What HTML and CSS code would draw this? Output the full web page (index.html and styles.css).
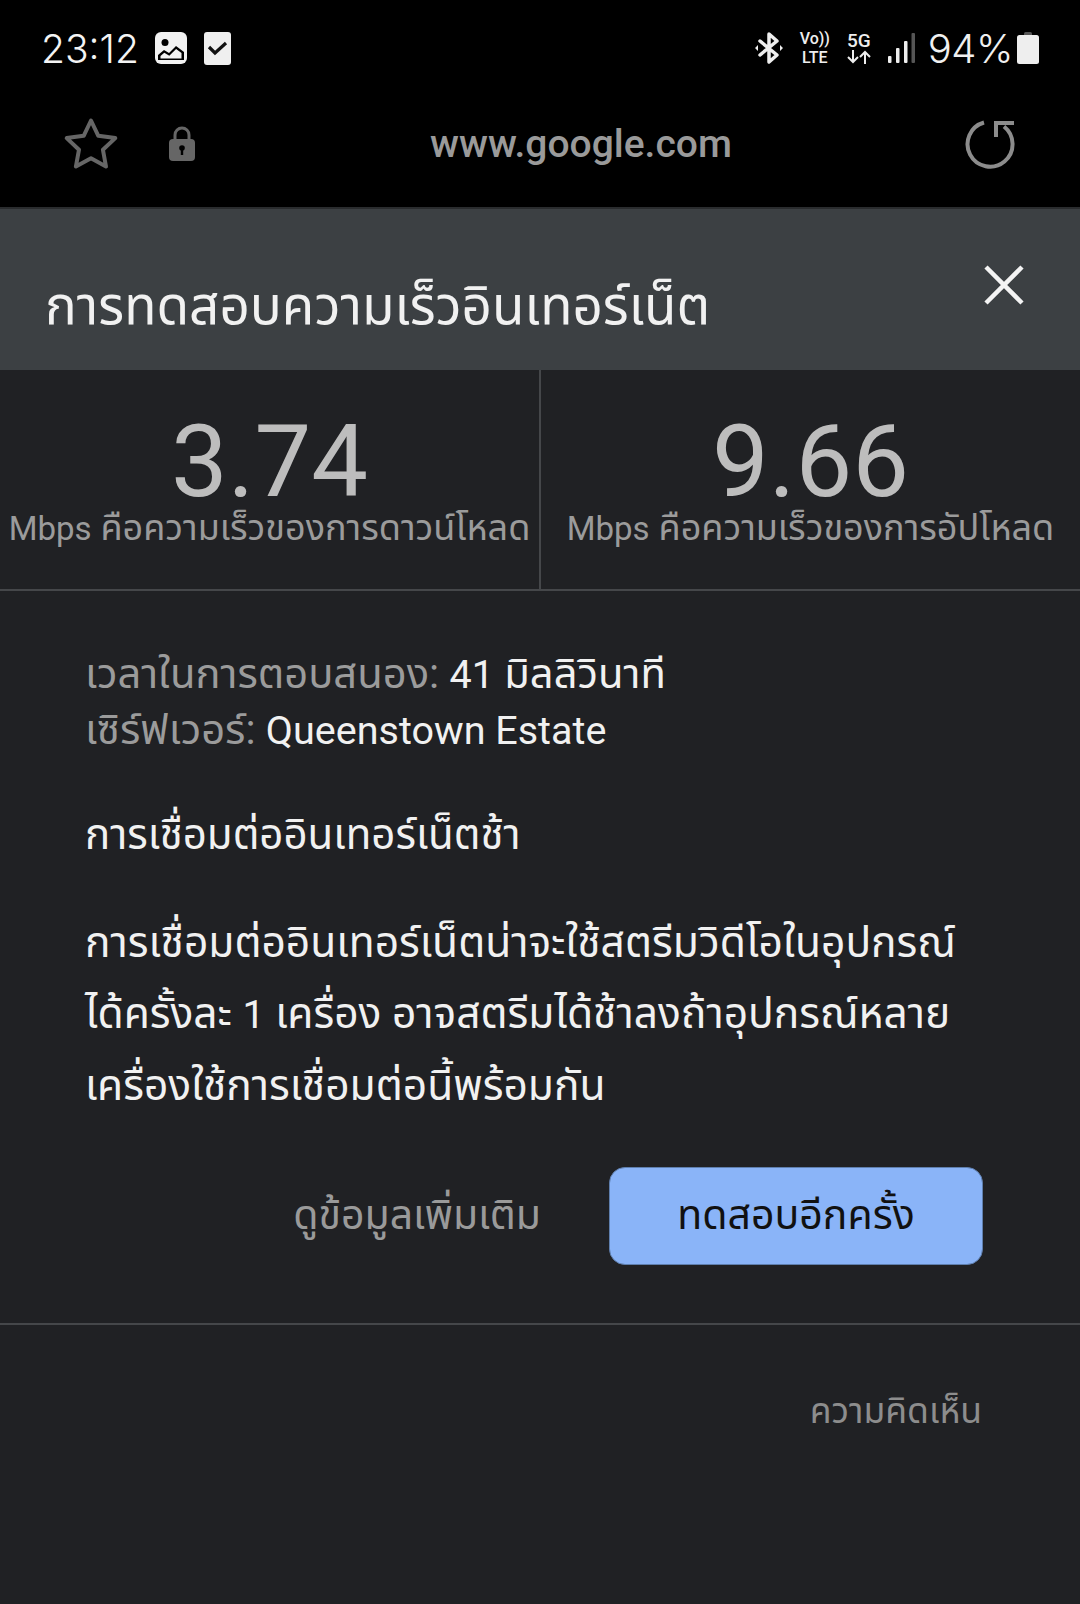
FILE: index.html
```html
<!DOCTYPE html>
<html lang="th">
<head>
    <meta charset="UTF-8">
    <meta name="viewport" content="width=device-width, initial-scale=1.0">
    <title>การทดสอบความเร็วอินเทอร์เน็ต</title>
    <link rel="stylesheet" href="styles.css">
</head>
<body>
    <div class="status-bar">
        <div class="status-left">
            <span class="clock">23:12</span>
            <svg class="ic-gallery" width="32" height="32" viewBox="0 0 32 32">
                <rect width="32" height="32" rx="6" fill="#f2f2f2"/>
                <circle cx="10" cy="10.500" r="3.500" fill="#000"/>
                <path d="M3 28v-5l6-5 5 3 7-7 8 6v8z" fill="#000"/>
                <path d="M5.500 26.500v-2.500l3.800-3.200 5 3 6.800-6.700 5.400 4v5.400z" fill="#f2f2f2"/>
            </svg>
            <svg class="ic-check" width="27" height="33" viewBox="0 0 27 33">
                <rect width="27" height="33" rx="3" fill="#efefef"/>
                <path d="M5 15l6 6L22 11" fill="none" stroke="#111" stroke-width="3.200"/>
            </svg>
        </div>
        <div class="status-right">
            <svg class="ic-bt" width="28" height="32" viewBox="0 0 28 32">
                <path d="M5 9l17 14-8 7V2l8 7L5 23" fill="none" stroke="#eee" stroke-width="3.500" stroke-linejoin="round" stroke-linecap="round"/>
                <path d="M0 16l3-3v6zM28 16l-3-3v6z" fill="#eee"/>
            </svg>
            <div class="net-label">
                <span class="volte-top">Vo))</span>
                <span class="volte-bottom">LTE</span>
            </div>
            <div class="net-label net-5g">
                <span class="volte-top">5G</span>
                <svg width="24" height="14" viewBox="0 0 24 14">
                    <path d="M6 0v12M1 7l5 5 5-5M18 14V2M13 7l5-5 5 5" fill="none" stroke="#eee" stroke-width="2"/>
                </svg>
            </div>
            <svg class="ic-signal" width="27" height="30" viewBox="0 0 27 30">
                <rect x="0" y="23" width="3.500" height="7" rx="1" fill="#eee"/>
                <rect x="8" y="15" width="3.500" height="15" rx="1" fill="#eee"/>
                <rect x="16" y="8" width="3.500" height="22" rx="1" fill="#eee"/>
                <rect x="23.500" y="0" width="3.500" height="30" rx="1" fill="#555"/>
            </svg>
            <span class="battery-text">94%</span>
            <svg class="ic-battery" width="22" height="32" viewBox="0 0 22 32">
                <path d="M7 3V1.500Q7 0 8.500 0h5Q15 0 15 1.500V3z" fill="#555"/>
                <path d="M2.500 3h17Q22 3 22 5.500v24q0 2.500-2.500 2.500h-17Q0 32 0 29.500v-24Q0 3 2.500 3z" fill="#eee"/>
            </svg>
        </div>
    </div>

    <div class="url-bar">
        <svg class="ic-star" width="56" height="54" viewBox="0 0 56 54">
            <path d="M28 3.500l7.300 15.300 17 2.300-12.400 11.600 3.100 16.800L28 41.300 12.900 49.500 16 32.700 3.700 21.100l17-2.300z" fill="none" stroke="#666" stroke-width="4" stroke-linejoin="round"/>
        </svg>
        <svg class="ic-lock" width="26" height="35" viewBox="0 0 26 35">
            <path d="M6 14V9a7 7 0 0 1 14 0v5" fill="none" stroke="#666" stroke-width="3"/>
            <rect y="13" width="26" height="22" rx="4" fill="#666"/>
            <circle cx="13" cy="22" r="2.800" fill="#000"/>
            <rect x="11.800" y="23" width="2.400" height="6" fill="#000"/>
        </svg>
        <span class="url-text">www.google.com</span>
        <svg class="ic-reload" width="52" height="50" viewBox="0 0 52 50">
            <path d="M20 3.500A22.500 22.500 0 1 0 40 7.500" fill="none" stroke="#8c8c8c" stroke-width="4"/>
            <path d="M32 18V4H50" fill="none" stroke="#8c8c8c" stroke-width="4"/>
        </svg>
    </div>

    <div class="panel-head">
        <h1>การทดสอบความเร็วอินเทอร์เน็ต</h1>
        <svg class="ic-close" width="40" height="40" viewBox="0 0 40 40">
            <path d="M2 2l36 36M38 2L2 38" stroke="#f4f4f4" stroke-width="4.500"/>
        </svg>
    </div>

    <div class="speeds">
        <div class="speed-col speed-down">
            <div class="speed-num">3.74</div>
            <div class="speed-label"><span class="lat-small">Mbps</span> คือความเร็วของการดาวน์โหลด</div>
        </div>
        <div class="speed-col">
            <div class="speed-num">9.66</div>
            <div class="speed-label"><span class="lat-small">Mbps</span> คือความเร็วของการอัปโหลด</div>
        </div>
    </div>

    <div class="details">
        <p class="detail-line"><span class="muted">เวลาในการตอบสนอง:</span> <span class="lat">41</span> มิลลิวินาที</p>
        <p class="detail-line"><span class="muted">เซิร์ฟเวอร์:</span> <span class="lat">Queenstown Estate</span></p>
        <p class="conn-title">การเชื่อมต่ออินเทอร์เน็ตช้า</p>
        <p class="conn-text">การเชื่อมต่ออินเทอร์เน็ตน่าจะใช้สตรีมวิดีโอในอุปกรณ์<br>ได้ครั้งละ <span class="lat">1</span> เครื่อง อาจสตรีมได้ช้าลงถ้าอุปกรณ์หลาย<br>เครื่องใช้การเชื่อมต่อนี้พร้อมกัน</p>
        <div class="actions">
            <span class="more-link">ดูข้อมูลเพิ่มเติม</span>
            <button class="retry-btn">ทดสอบอีกครั้ง</button>
        </div>
    </div>

    <div class="feedback">
        <span>ความคิดเห็น</span>
    </div>
</body>
</html>
```

FILE: styles.css
```css
html, body {
    height: 100%;
}

body {
    margin: 0;
    height: 1604px;
    overflow: hidden;
    background-color: #202124;
    color: #fff;
    font-family: Roboto, "Noto Sans", "Noto Sans Thai", sans-serif;
}

p, h1 {
    margin: 0;
    font-weight: 400;
}

.status-bar {
    height: 96px;
    background-color: #000;
    display: flex;
    justify-content: space-between;
    align-items: center;
    padding: 0 41px 0 41px;
    box-sizing: border-box;
}

.status-left, .status-right {
    display: flex;
    align-items: center;
}

.clock {
    font-family: Inter, Roboto, sans-serif;
    font-size: 39px;
    font-weight: 300;
    color: #f4f4f4;
    margin-right: 16px;
}

.ic-check {
    margin-left: 17px;
}

.ic-bt {
    margin-right: 16px;
}

.net-label {
    display: flex;
    flex-direction: column;
    align-items: center;
    width: 32px;
    margin-right: 15px;
    color: #eee;
    font-weight: 500;
    line-height: 19px;
}

.net-5g {
    width: 26px;
    margin-right: 16px;
    line-height: 18px;
}

.volte-top {
    font-size: 16px;
}

.net-5g .volte-top {
    font-size: 19px;
}

.volte-bottom {
    font-size: 16px;
}

.battery-text {
    font-family: Inter, Roboto, sans-serif;
    font-size: 40px;
    font-weight: 300;
    letter-spacing: -0.500px;
    color: #f0f0f0;
    margin: 0 4px 0 13px;
}

.url-bar {
    height: 113px;
    box-sizing: border-box;
    background-color: #000;
    display: flex;
    align-items: center;
    padding: 0 64px 16px 63px;
    border-bottom: 2px solid #2a2c2e;
}

.ic-star {
    margin-right: 50px;
}

.url-text {
    flex: 1;
    font-size: 39px;
    font-weight: 500;
    color: #9a9a9a;
    margin-left: 235px;
}

.panel-head {
    height: 161px;
    background-color: #3c4043;
    display: flex;
    justify-content: space-between;
    padding: 58px 56px 0 45px;
    box-sizing: border-box;
}

.panel-head h1 {
    font-size: 53px;
    color: #f1f1f1;
    line-height: 78px;
}

.ic-close {
    margin-top: -2px;
}

.speeds {
    display: grid;
    grid-template-columns: 541px 1fr;
    height: 221px;
    border-bottom: 2px solid #45474a;
    box-sizing: border-box;
}

.speed-col {
    text-align: center;
    overflow: hidden;
}

.speed-down {
    border-right: 2px solid #45474a;
}

.speed-num {
    font-size: 101px;
    color: #bdbdbd;
    line-height: 92px;
    margin-top: 46px;
}

.speed-label {
    font-size: 36px;
    color: #9b9b9b;
    line-height: 40px;
    white-space: nowrap;
}

.lat-small {
    font-size: 33px;
}

.lat {
    font-size: 39.500px;
}

.details {
    padding: 55px 97px 0 85px;
    color: #f1f1f1;
}

.detail-line {
    font-size: 41.700px;
    line-height: 55px;
}

.muted {
    color: #9b9b9b;
}

.conn-title {
    font-size: 42px;
    line-height: 56px;
    margin-top: 49px;
}

.conn-text {
    font-size: 42.500px;
    line-height: 71px;
    margin-top: 44px;
}

.actions {
    display: flex;
    justify-content: flex-end;
    align-items: center;
    margin-top: 46px;
    gap: 68px;
}

.more-link {
    font-size: 41px;
    color: #9a9a9a;
}

.retry-btn {
    width: 374px;
    height: 98px;
    background-color: #8ab4f8;
    border: 1px solid #5f7fae;
    border-radius: 16px;
    color: #111;
    font-family: inherit;
    font-size: 41px;
}

.feedback {
    margin-top: 58px;
    border-top: 2px solid #45474a;
    padding: 60px 98px 0 0;
    text-align: right;
    font-size: 35.500px;
    color: #8d8d8d;
}
```
